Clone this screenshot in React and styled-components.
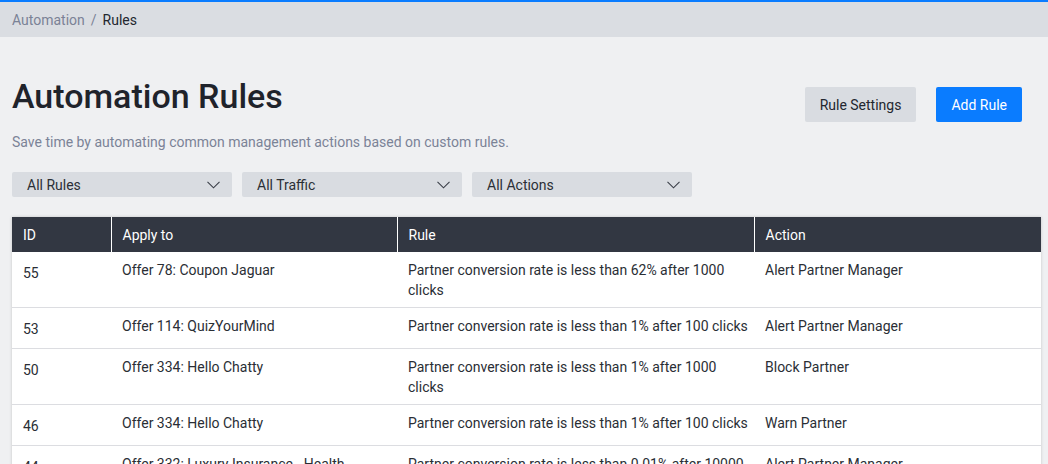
import React from 'react';
import styled, { createGlobalStyle } from 'styled-components';

const GlobalStyle = createGlobalStyle`
  html, body {
    margin: 0;
    padding: 0;
    background: #eff0f2;
  }

  body {
    font-family: Roboto, "Liberation Sans", Arial, sans-serif;
    font-size: 14px;
    color: #23272f;
    -webkit-font-smoothing: antialiased;
  }

  * {
    box-sizing: border-box;
  }
`;

const Page = styled.div`
  min-height: 464px;
  border-top: 2px solid #0a7cff;
`;

const Breadcrumbs = styled.nav`
  height: 35px;
  background-color: #dadde2;
  display: flex;
  align-items: center;
  gap: 6px;
  padding: 0 12px;
  font-size: 14px;
  line-height: 20px;
`;

const Crumb = styled.span`
  color: ${({ $current }) => ($current ? '#23272f' : '#7b8296')};
`;

const Content = styled.main`
  padding: 39px 7px 0 12px;
`;

const Header = styled.div`
  display: flex;
  justify-content: space-between;
  align-items: flex-start;
  padding-right: 19px;
`;

const TitleBlock = styled.div`
  display: flex;
  flex-direction: column;
`;

const Title = styled.h1`
  margin: 0;
  font-size: 34px;
  line-height: 40px;
  font-weight: 500;
  color: #1f232b;
`;

const Subtitle = styled.p`
  margin: 16px 0 0;
  font-size: 14px;
  line-height: 20px;
  color: #7b8397;
`;

const Actions = styled.div`
  display: flex;
  gap: 20px;
  margin-top: 11px;
`;

const Button = styled.button`
  height: 35px;
  padding: 0 15px;
  border: none;
  border-radius: 2px;
  font-family: inherit;
  font-size: 14px;
  cursor: pointer;
  background-color: ${({ $primary }) => ($primary ? '#0a7cff' : '#d9dce1')};
  color: ${({ $primary }) => ($primary ? '#ffffff' : '#23272f')};
`;

const Filters = styled.div`
  display: flex;
  gap: 10px;
  margin-top: 20px;
`;

const Select = styled.div`
  width: 220px;
  height: 25px;
  border-radius: 2px;
  background-color: #d9dce1;
  display: flex;
  align-items: center;
  justify-content: space-between;
  padding: 0 12px 0 15px;
  font-size: 14px;
  color: #2b2f36;
  cursor: pointer;
`;

const Chevron = () => (
  <svg width="13" height="8" viewBox="0 0 13 8" fill="none">
    <polyline points="0.5,0.8 6.5,6.8 12.5,0.8" stroke="#3a3f48" strokeWidth="1.1" />
  </svg>
);

const TableWrap = styled.div`
  margin-top: 20px;
  background: #ffffff;
  box-shadow: 0 0 3px rgba(0, 0, 0, 0.18);
`;

const Table = styled.table`
  width: 100%;
  border-collapse: collapse;
  table-layout: fixed;
`;

const HeadCell = styled.th`
  height: 35px;
  padding: 0 11px;
  text-align: left;
  font-weight: 400;
  font-size: 14px;
  color: #ffffff;
  background-color: #323742;
  border-left: 1px solid #ffffff;

  &:first-child {
    border-left: none;
  }
`;

const Row = styled.tr`
  border-top: 1px solid #dcdde1;

  &:first-child {
    border-top: none;
  }
`;

const Cell = styled.td`
  padding: ${({ $id }) => ($id ? '11px 11px 9px' : '8px 6px 7px 11px')};
  vertical-align: top;
  font-size: 14px;
  line-height: 20px;
  color: #2a2e35;
`;

const columns = [
  { key: 'id', label: 'ID', width: 99 },
  { key: 'apply', label: 'Apply to', width: 286 },
  { key: 'rule', label: 'Rule', width: 357 },
  { key: 'action', label: 'Action' },
];

const rules = [
  {
    id: 55,
    apply: 'Offer 78: Coupon Jaguar',
    rule: 'Partner conversion rate is less than 62% after 1000 clicks',
    action: 'Alert Partner Manager',
  },
  {
    id: 53,
    apply: 'Offer 114: QuizYourMind',
    rule: 'Partner conversion rate is less than 1% after 100 clicks',
    action: 'Alert Partner Manager',
  },
  {
    id: 50,
    apply: 'Offer 334: Hello Chatty',
    rule: 'Partner conversion rate is less than 1% after 1000 clicks',
    action: 'Block Partner',
  },
  {
    id: 46,
    apply: 'Offer 334: Hello Chatty',
    rule: 'Partner conversion rate is less than 1% after 100 clicks',
    action: 'Warn Partner',
  },
  {
    id: 44,
    apply: 'Offer 332: Luxury Insurance - Health Insurance',
    rule: 'Partner conversion rate is less than 0.01% after 10000 clicks',
    action: 'Alert Partner Manager',
  },
  {
    id: 41,
    apply: 'Offer 78: Coupon Jaguar',
    rule: 'Partner conversion rate is less than 5% after 500 clicks',
    action: 'Warn Partner',
  },
];

const filters = ['All Rules', 'All Traffic', 'All Actions'];

export default function App() {
  return (
    <>
      <GlobalStyle />
      <Page>
        <Breadcrumbs>
          <Crumb>Automation</Crumb>
          <Crumb>/</Crumb>
          <Crumb $current>Rules</Crumb>
        </Breadcrumbs>

        <Content>
          <Header>
            <TitleBlock>
              <Title>Automation Rules</Title>
              <Subtitle>
                Save time by automating common management actions based on custom rules.
              </Subtitle>
            </TitleBlock>
            <Actions>
              <Button>Rule Settings</Button>
              <Button $primary>Add Rule</Button>
            </Actions>
          </Header>

          <Filters>
            {filters.map((f) => (
              <Select key={f}>
                <span>{f}</span>
                <Chevron />
              </Select>
            ))}
          </Filters>

          <TableWrap>
            <Table>
              <colgroup>
                {columns.map((c) => (
                  <col key={c.key} style={c.width ? { width: c.width } : undefined} />
                ))}
              </colgroup>
              <thead>
                <tr>
                  {columns.map((c) => (
                    <HeadCell key={c.key}>{c.label}</HeadCell>
                  ))}
                </tr>
              </thead>
              <tbody>
                {rules.map((r) => (
                  <Row key={r.id}>
                    <Cell $id>{r.id}</Cell>
                    <Cell>{r.apply}</Cell>
                    <Cell>{r.rule}</Cell>
                    <Cell>{r.action}</Cell>
                  </Row>
                ))}
              </tbody>
            </Table>
          </TableWrap>
        </Content>
      </Page>
    </>
  );
}
